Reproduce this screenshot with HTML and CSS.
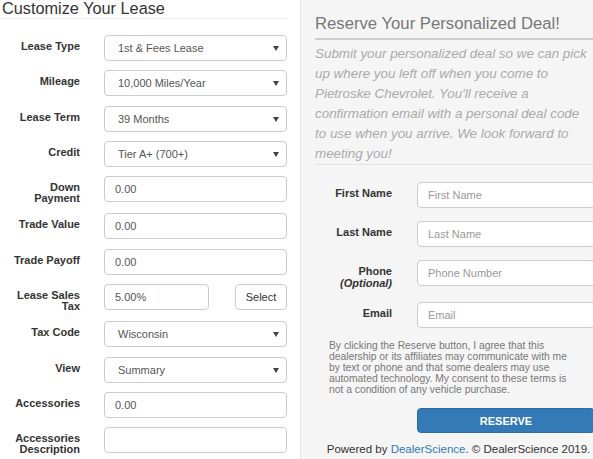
FILE: index.html
```html
<!DOCTYPE html>
<html lang="en">
<head>
<meta charset="utf-8">
<title>Customize Your Lease</title>
<link rel="stylesheet" href="styles.css">
</head>
<body>
<div class="page">

  <!-- ===== lease options ===== -->
  <section class="lease">
    <h3 class="lease-title">Customize Your Lease</h3>
    <form class="lease-form">
      <div class="row">
        <label>Lease Type</label>
        <div class="select-wrap"><select><option>1st &amp; Fees Lease</option></select></div>
      </div>
      <div class="row">
        <label>Mileage</label>
        <div class="select-wrap"><select><option>10,000 Miles/Year</option></select></div>
      </div>
      <div class="row">
        <label>Lease Term</label>
        <div class="select-wrap"><select><option>39 Months</option></select></div>
      </div>
      <div class="row">
        <label>Credit</label>
        <div class="select-wrap"><select><option>Tier A+ (700+)</option></select></div>
      </div>
      <div class="row">
        <label>Down Payment</label>
        <input class="field" type="text" value="0.00">
      </div>
      <div class="row">
        <label>Trade Value</label>
        <input class="field" type="text" value="0.00">
      </div>
      <div class="row">
        <label>Trade Payoff</label>
        <input class="field" type="text" value="0.00">
      </div>
      <div class="row">
        <label>Lease Sales Tax</label>
        <div class="tax-group">
          <input class="field tax-field" type="text" value="5.00%">
          <button type="button" class="btn-select">Select</button>
        </div>
      </div>
      <div class="row">
        <label>Tax Code</label>
        <div class="select-wrap"><select><option>Wisconsin</option></select></div>
      </div>
      <div class="row">
        <label>View</label>
        <div class="select-wrap"><select><option>Summary</option></select></div>
      </div>
      <div class="row">
        <label>Accessories</label>
        <input class="field" type="text" value="0.00">
      </div>
      <div class="row">
        <label>Accessories Description</label>
        <input class="field" type="text" value="">
      </div>
    </form>
  </section>

  <!-- ===== reserve panel ===== -->
  <section class="reserve">
    <h3 class="reserve-title">Reserve Your Personalized Deal!</h3>
    <p class="reserve-intro">Submit your personalized deal so we can pick up where you left off when you come to Pietroske Chevrolet. You'll receive a confirmation email with a personal deal code to use when you arrive. We look forward to meeting you!</p>

    <form class="reserve-form">
      <div class="row">
        <label>First Name</label>
        <input class="field" type="text" placeholder="First Name">
      </div>
      <div class="row">
        <label>Last Name</label>
        <input class="field" type="text" placeholder="Last Name">
      </div>
      <div class="row">
        <label>Phone <em>(Optional)</em></label>
        <input class="field" type="text" placeholder="Phone Number">
      </div>
      <div class="row">
        <label>Email</label>
        <input class="field" type="text" placeholder="Email">
      </div>
    </form>

    <p class="consent">By clicking the Reserve button, I agree that this<br>
      dealership or its affiliates may communicate with me<br>
      by text or phone and that some dealers may use<br>
      automated technology. My consent to these terms is<br>
      not a condition of any vehicle purchase.</p>

    <button type="button" class="btn-reserve">RESERVE</button>

    <p class="powered">Powered by <a href="#">DealerScience</a>. &copy; DealerScience 2019.</p>
  </section>

</div>
</body>
</html>
```

FILE: styles.css
```css
/* ==== reset & common ==== */
*,*::before,*::after{box-sizing:border-box}
html,body{margin:0;padding:0;overflow:hidden;background:#fff}
body{font-family:"Liberation Sans",Arial,sans-serif;color:#333}

.page{display:flex;width:616px;min-height:100vh}

/* shared controls */
.field,
.select-wrap select{
  display:block;width:100%;height:26px;margin:0;
  padding:0 10px;
  border:1px solid #ccc;border-radius:4px;
  background:#fff;color:#555;
  font-family:inherit;font-size:11px;
}
.field::placeholder{color:#999}
.select-wrap{position:relative;width:183px}
.select-wrap select{appearance:none;-webkit-appearance:none;padding-left:13px}
.select-wrap::after{
  content:"";position:absolute;top:11px;right:8px;
  border-left:3px solid transparent;border-right:3px solid transparent;
  border-top:5px solid #444;
  pointer-events:none;
}

.row label{
  font-size:11px;font-weight:700;line-height:11px;
  text-align:right;padding-top:6px;
}

/* ==== left : lease ==== */
.lease{flex:0 0 300px;padding:0 13px 0 0}
.lease-title{
  margin:0;padding:0 0 0 2px;
  font-size:16.3px;font-weight:400;line-height:1.1;
  border-bottom:1px solid #eee;
}
.lease-form{display:flex;flex-direction:column;gap:9.3px;margin-top:16px}
.lease-form .row{display:flex;align-items:flex-start}
.lease-form label{width:70px;margin-left:10px}
.lease-form .field,
.lease-form .select-wrap,
.tax-group{margin-left:24px;width:183px}
.tax-group{display:flex;justify-content:space-between}
.tax-group .field{margin:0;width:105px}
.btn-select{
  width:52px;height:26px;
  border:1px solid #ccc;border-radius:4px;background:#fff;
  color:#333;font-family:inherit;font-size:11px;
}

/* ==== right : reserve ==== */
.reserve{
  flex:0 0 316px;
  background:#f5f5f5;border-left:1px solid #e5e5e5;
  padding:14.5px 14px 0;
}
.reserve-title{
  margin:0;padding-bottom:5px;
  font-size:16.7px;font-weight:400;line-height:1.1;color:#777;
  border-bottom:2px solid #ccc;
}
.reserve-intro{
  width:287px;padding-right:11px;margin:4.5px 0 0;
  font-size:13.4px;font-style:italic;line-height:20px;color:#aaa;
  border-bottom:1px solid #e3e3e3;
}
.reserve-form{display:flex;flex-direction:column;gap:13px;margin-top:16.5px}
.reserve-form .row{display:flex;align-items:flex-start;gap:25px}
.reserve-form label{width:77px;flex:none}
.reserve-form label em{display:block;line-height:12px}
.reserve-form .field{width:178px}

.consent{
  margin:12.5px 0 0 14px;white-space:nowrap;
  font-size:10.3px;line-height:11px;color:#777;
}
.btn-reserve{
  display:block;width:178px;height:25px;margin:12.8px 0 0 102px;
  background:#337ab7;border:1px solid #2e6da4;border-radius:4px;
  color:#fff;font-family:inherit;font-size:11px;font-weight:700;
}
.powered{
  margin:8px 0 0;text-align:center;
  font-size:11.5px;line-height:16.4px;color:#333;
}
.powered a{color:#337ab7;text-decoration:none}
```
